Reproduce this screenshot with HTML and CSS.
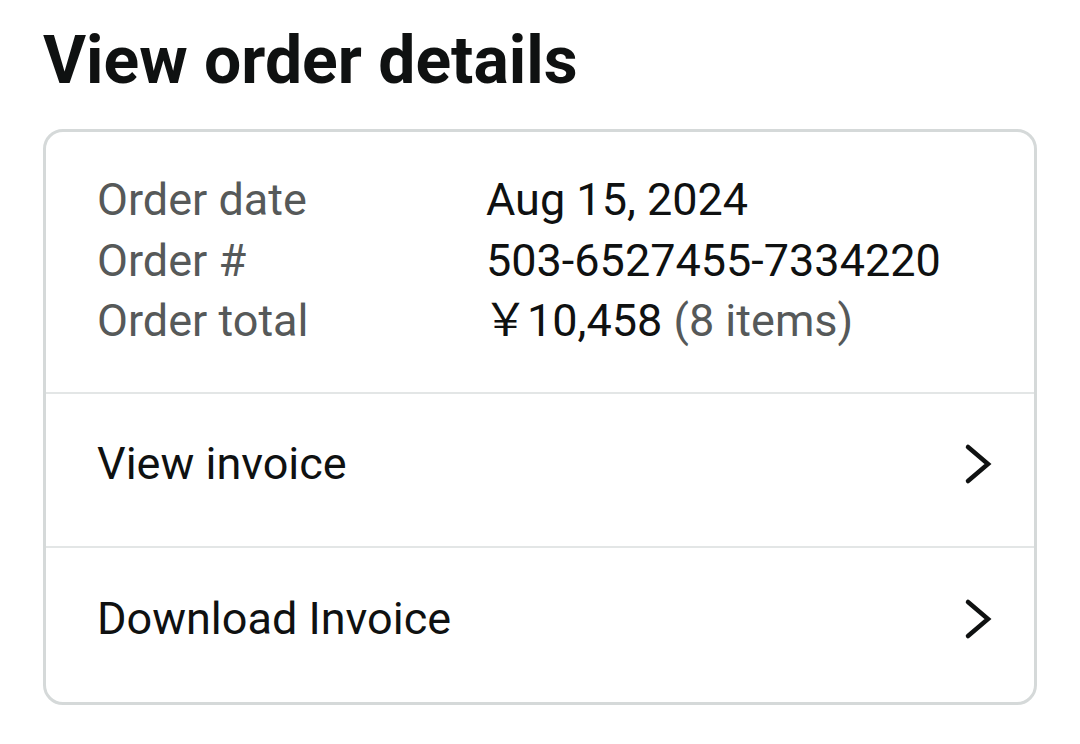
FILE: index.html
```html
<!DOCTYPE html>
<html>
<head>
<meta charset="utf-8">
<link rel="stylesheet" href="styles.css">
</head>
<body>
<main class="page">
  <h1 class="title">View order details</h1>
  <section class="card">
    <div class="summary">
      <div class="row"><span class="label">Order date</span><span class="value">Aug 15, 2024</span></div>
      <div class="row"><span class="label">Order #</span><span class="value">503-6527455-7334220</span></div>
      <div class="row"><span class="label">Order total</span><span class="value"><span class="yen">￥</span>10,458 <span class="muted">(8 items)</span></span></div>
    </div>
    <a class="link-row" href="#"><span>View invoice</span>
      <svg class="chev" viewBox="0 0 30 44" width="30" height="44"><path d="M6 5 L26 22 L6 39" fill="none" stroke="#0f1111" stroke-width="4.5" stroke-linecap="round" stroke-linejoin="miter"/></svg>
    </a>
    <a class="link-row" href="#"><span>Download Invoice</span>
      <svg class="chev" viewBox="0 0 30 44" width="30" height="44"><path d="M6 5 L26 22 L6 39" fill="none" stroke="#0f1111" stroke-width="4.5" stroke-linecap="round" stroke-linejoin="miter"/></svg>
    </a>
  </section>
</main>
</body>
</html>
```
FILE: styles.css
```css
* { box-sizing: border-box; }
html, body { margin: 0; padding: 0; background: #ffffff; }
body { font-family: Roboto, "Noto Sans CJK JP", sans-serif; color: #0f1111; }
.page { padding: 21px 43px 0 43px; width: 1080px; }
.title { margin: 0; font-size: 66px; font-weight: 700; line-height: 80px; letter-spacing: 0; }
.card { margin-top: 28px; width: 994px; border: 3px solid #d5d9d9; border-radius: 20px; overflow: hidden; }
.summary { height: 262px; padding: 38px 52px 0 51px; border-bottom: 2px solid #e3e6e6; }
.row { display: flex; font-size: 45px; line-height: 60.5px; }
.label { width: 389px; flex: none; color: #565959; }
.value { color: #0f1111; white-space: nowrap; }
.yen { margin-left: -3px; margin-right: -1px; }
.muted { color: #565959; }
.link-row { display: flex; align-items: center; justify-content: space-between; height: 152px; padding: 0 42px 13px 51px; font-size: 45px; color: #0f1111; text-decoration: none; }
.link-row + .link-row { border-top: 2px solid #e3e6e6; height: 156px; }
.chev { display: block; }
```
